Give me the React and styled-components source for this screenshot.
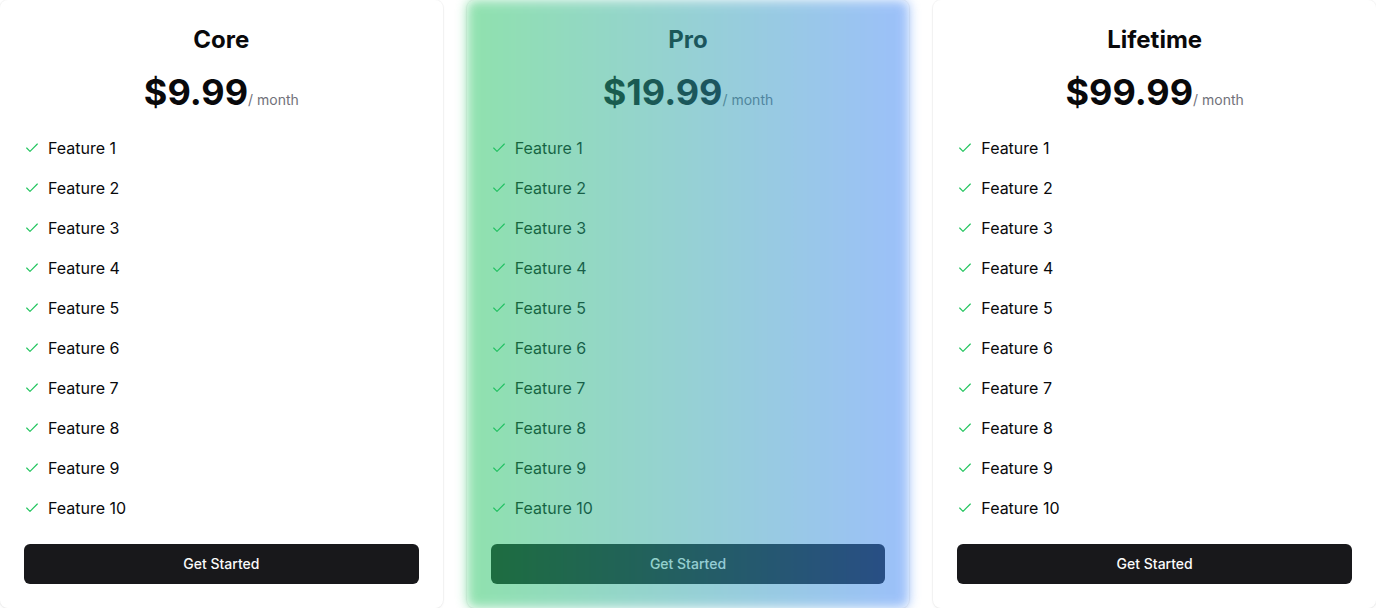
import React from "react";
import styled, { createGlobalStyle } from "styled-components";
import { Check } from "lucide-react";

const GlobalStyle = createGlobalStyle`
  html, body {
    margin: 0;
    padding: 0;
    background: #ffffff;
    font-family: Inter, "Noto Sans", sans-serif;
    color: #09090b;
  }
`;

const Grid = styled.div`
  display: grid;
  grid-template-columns: repeat(3, 1fr);
  gap: 24px;
  width: 1376px;
`;

const Card = styled.section`
  position: relative;
  display: flex;
  flex-direction: column;
  padding: 24px;
  height: 608px;
  box-sizing: border-box;
  background: #ffffff;
  border-radius: 8px;
  box-shadow: 0 0 0 1px rgba(0, 0, 0, 0.03), 0 1px 3px rgba(0, 0, 0, 0.06);
`;

const Glow = styled.div`
  position: absolute;
  inset: 0;
  border-radius: 8px;
  background: linear-gradient(to right, #22c55e, #3b82f6);
  opacity: 0.5;
  filter: blur(6px);
  pointer-events: none;
`;

const Title = styled.h2`
  margin: 0;
  text-align: center;
  font-size: 24px;
  line-height: 32px;
  font-weight: 700;
`;

const PriceRow = styled.div`
  display: flex;
  justify-content: center;
  align-items: baseline;
  margin-top: 16px;
`;

const Price = styled.span`
  font-size: 36px;
  line-height: 40px;
  font-weight: 700;
`;

const Period = styled.span`
  font-size: 14px;
  color: #71717a;
`;

const List = styled.ul`
  list-style: none;
  margin: 24px 0 0;
  padding: 0;
  display: flex;
  flex-direction: column;
  gap: 16px;
`;

const Item = styled.li`
  display: flex;
  align-items: center;
  gap: 8px;
  font-size: 16px;
  line-height: 24px;
  color: #09090b;

  svg {
    color: #22c55e;
    flex-shrink: 0;
  }
`;

const Button = styled.button`
  margin-top: 24px;
  height: 40px;
  width: 100%;
  border: none;
  border-radius: 6px;
  background: #18181b;
  color: #fafafa;
  font-family: Inter, "Noto Sans", sans-serif;
  font-size: 14px;
  line-height: 20px;
  font-weight: 500;
  padding: 0 16px 1px;
  cursor: pointer;
`;

const plans = [
  { name: "Core", price: "$9.99" },
  { name: "Pro", price: "$19.99", featured: true },
  { name: "Lifetime", price: "$99.99" },
];

const features = Array.from({ length: 10 }, (_, i) => `Feature ${i + 1}`);

const PlanCard = ({ plan }) => (
  <Card>
    <Title>{plan.name}</Title>
    <PriceRow>
      <Price>{plan.price}</Price>
      <Period>/ month</Period>
    </PriceRow>
    <List>
      {features.map((f) => (
        <Item key={f}>
          <Check size={16} strokeWidth={1.75} />
          {f}
        </Item>
      ))}
    </List>
    <Button>Get Started</Button>
    {plan.featured && <Glow />}
  </Card>
);

export default function App() {
  return (
    <>
      <GlobalStyle />
      <Grid>
        {plans.map((p) => (
          <PlanCard key={p.name} plan={p} />
        ))}
      </Grid>
    </>
  );
}
